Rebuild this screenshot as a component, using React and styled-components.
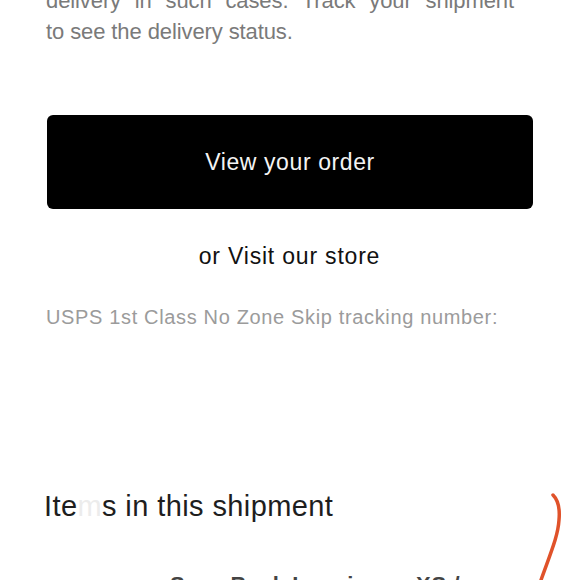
import React from "react";
import styled, { createGlobalStyle } from "styled-components";

const GlobalStyle = createGlobalStyle`
	html, body {
		margin: 0;
		padding: 0;
		background: #ffffff;
	}
	body {
		font-family: "Liberation Sans", Arial, sans-serif;
		overflow: hidden;
	}
`;

const Page = styled.div`
	width: 580px;
	height: 580px;
	overflow: hidden;
	box-sizing: border-box;
	padding: 0 47px 0 46px;
	position: relative;
`;

const Notice = styled.p`
	margin: -15px 0 0;
	font-size: 22px;
	line-height: 31px;
	color: #7a7a7a;
	letter-spacing: -0.1px;
`;

const NoticeLine = styled.span`
	display: block;
	width: ${(p) => (p.$full ? "468px" : "auto")};
	text-align: ${(p) => (p.$full ? "justify" : "left")};
	text-align-last: ${(p) => (p.$full ? "justify" : "left")};
`;

const OrderButton = styled.a`
	display: flex;
	align-items: center;
	justify-content: center;
	height: 94px;
	margin: 68px 0 0 1px;
	background: #000;
	border-radius: 6px;
	color: #f4f4f4;
	font-size: 23px;
	text-decoration: none;
	letter-spacing: 0.6px;
`;

const StoreLine = styled.p`
	margin: 34px 0 0;
	text-align: center;
	font-size: 23px;
	line-height: 26px;
	color: #111;
	letter-spacing: 0.8px;
`;

const Tracking = styled.p`
	margin: 36px 0 0;
	font-size: 20px;
	line-height: 24px;
	color: #9b9b9b;
	letter-spacing: 0.65px;
`;

const SectionTitle = styled.h2`
	margin: 161px 0 0 -2px;
	font-size: 29px;
	line-height: 32px;
	font-weight: normal;
	color: #1e1e1e;
	letter-spacing: 0.4px;
`;

const Faded = styled.span`
	color: #ececec;
`;

const ItemName = styled.p`
	margin: 50px 0 0 124px;
	font-size: 22px;
	line-height: 26px;
	font-weight: bold;
	color: #444;
	white-space: nowrap;
	letter-spacing: 0.6px;
`;

const Scribble = styled.svg`
	position: absolute;
	left: 530px;
	top: 490px;
	width: 40px;
	height: 90px;
`;

const App = () => {
	return (
		<Page>
			<GlobalStyle />
			<Notice>
				<NoticeLine $full>delivery in such cases. Track your shipment</NoticeLine>
				<NoticeLine>to see the delivery status.</NoticeLine>
			</Notice>
			<OrderButton href="#">View your order</OrderButton>
			<StoreLine>or Visit our store</StoreLine>
			<Tracking>USPS 1st Class No Zone Skip tracking number:</Tracking>
			<SectionTitle>
				Ite<Faded>m</Faded>s in this shipment
			</SectionTitle>
			<ItemName>Sexy Back Leggings - XS /</ItemName>
			<Scribble viewBox="0 0 40 90">
				<path
					d="M23 5 C29 11 30 19 29 30 C28 46 21 62 11 90"
					fill="none"
					stroke="#e0522a"
					strokeWidth="3.5"
					strokeLinecap="round"
				/>
			</Scribble>
		</Page>
	);
};

export default App;
